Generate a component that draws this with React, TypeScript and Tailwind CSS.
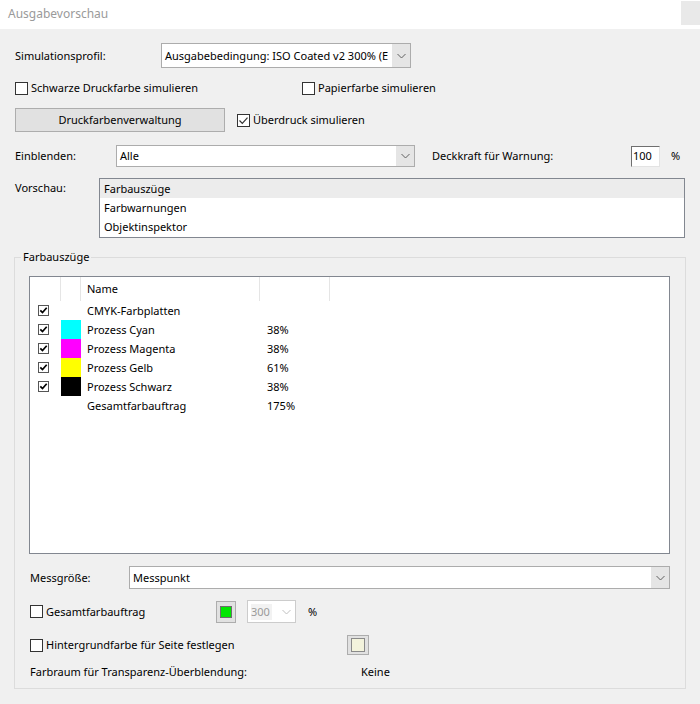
import React from 'react';

const Chevron = ({ color = '#606060' }: { color?: string }) => (
    <svg width="9" height="6" viewBox="0 0 9 6">
        <path d="M0.5 1 L4.5 5 L8.5 1" fill="none" stroke={color} strokeWidth="1" />
    </svg>
);

const CheckBox = ({ checked }: { checked?: boolean }) => (
    <span className="w-[13px] h-[13px] border border-[#333333] bg-white flex items-center justify-center shrink-0">
        {checked && (
            <svg width="11" height="11" viewBox="0 0 11 11">
                <path d="M1.5 5.5 L4.3 8.3 L9.5 2.6" fill="none" stroke="#333333" strokeWidth="1.2" />
            </svg>
        )}
    </span>
);

const SmallCheck = () => (
    <span className="w-[11px] h-[11px] border border-[#555555] bg-white flex items-center justify-center shrink-0">
        <svg width="9" height="9" viewBox="0 0 9 9">
            <path d="M1.3 4.3 L3.5 6.6 L7.7 1.8" fill="none" stroke="#000000" strokeWidth="1.7" />
        </svg>
    </span>
);

const Dropdown = ({ value, className }: { value: string; className: string }) => (
    <div className={`flex border border-[#acacac] bg-white ${className}`}>
        <div className="flex-1 flex items-center pl-[3px] pr-[4px] overflow-hidden whitespace-nowrap">{value}</div>
        <div className="w-[18px] bg-[#e5e5e5] flex items-center justify-center">
            <Chevron />
        </div>
    </div>
);

const rows = [
    { name: 'CMYK-Farbplatten', color: '', pct: '', check: true },
    { name: 'Prozess Cyan', color: 'bg-[#00ffff]', pct: '38%', check: true },
    { name: 'Prozess Magenta', color: 'bg-[#ff00ff]', pct: '38%', check: true },
    { name: 'Prozess Gelb', color: 'bg-[#ffff00]', pct: '61%', check: true },
    { name: 'Prozess Schwarz', color: 'bg-[#000000]', pct: '38%', check: true },
    { name: 'Gesamtfarbauftrag', color: '', pct: '175%', check: false },
];

export default function App() {
    return (
        <div className="w-[700px] h-[704px] bg-[#f0f0f0] flex flex-col text-[11px] leading-[16px] text-black" style={{ fontFamily: '"Noto Sans", sans-serif' }}>
            {/* title bar */}
            <div className="h-[29px] bg-white flex items-start justify-between shrink-0">
                <span className="pl-[8px] mt-[6px] text-[12px] text-[#9a9a9a]">Ausgabevorschau</span>
                <div className="w-[19px] h-[24px] mt-[1px] bg-[#e9e9e9]" />
            </div>

            <div className="flex-1 flex flex-col px-[15px] pt-[14px]">
                <div className="flex items-center h-[25px]">
                    <span className="w-[146px]">Simulationsprofil:</span>
                    <Dropdown value="Ausgabebedingung: ISO Coated v2 300% (E" className="w-[250px] h-[25px]" />
                </div>

                <div className="flex items-center h-[16px] mt-[12px]">
                    <label className="w-[287px] flex items-center gap-[3px]">
                        <CheckBox /> Schwarze Druckfarbe simulieren
                    </label>
                    <label className="flex items-center gap-[3px]">
                        <CheckBox /> Papierfarbe simulieren
                    </label>
                </div>

                <div className="flex items-center h-[24px] mt-[12px]">
                    <button className="w-[210px] h-[24px] bg-[#e1e1e1] border border-[#adadad]">Druckfarbenverwaltung</button>
                    <label className="ml-[12px] flex items-center gap-[3px]">
                        <CheckBox checked /> Überdruck simulieren
                    </label>
                </div>

                <div className="flex items-center h-[22px] mt-[13px]">
                    <span className="w-[101px]">Einblenden:</span>
                    <Dropdown value="Alle" className="w-[299px] h-[22px]" />
                    <span className="ml-[17px] w-[199px]">Deckkraft für Warnung:</span>
                    <div className="w-[29px] h-[21px] bg-white border-l border-t border-[#6f6f6f] border-r-[#e3e3e3] border-b-[#e3e3e3] border-r border-b flex items-center pl-[1px]">100</div>
                    <span className="ml-[11px]">%</span>
                </div>

                <div className="flex mt-[11px]">
                    <span className="w-[84px] mt-[2px]">Vorschau:</span>
                    <div className="flex-1 h-[60px] border border-[#828790] bg-white pb-[1px]">
                        <div className="h-[19px] flex items-center pl-[4px] bg-[#ececec]">Farbauszüge</div>
                        <div className="h-[19px] flex items-center pl-[4px]">Farbwarnungen</div>
                        <div className="h-[19px] flex items-center pl-[4px]">Objektinspektor</div>
                    </div>
                </div>

                <fieldset className="mt-[11px] mx-[-1px] border border-[#dcdcdc] pl-[14px] pr-[15px] pb-[8px]">
                    <legend className="ml-[-8px] px-[2px] leading-[16px]">Farbauszüge</legend>

                    <div className="mt-[11px] h-[278px] border border-[#828790] bg-white">
                        <div className="flex h-[24px]">
                            <div className="w-[31px] border-r border-[#e5e5e5]" />
                            <div className="w-[20px] border-r border-[#e5e5e5]" />
                            <div className="w-[179px] border-r border-[#e5e5e5] flex items-center pl-[6px]">Name</div>
                            <div className="w-[70px] border-r border-[#e5e5e5]" />
                        </div>
                        {rows.map((r) => (
                            <div key={r.name} className="flex h-[19px] items-center">
                                <div className="w-[31px] pl-[8px]">{r.check && <SmallCheck />}</div>
                                <div className={`w-[20px] h-[19px] ${r.color}`} />
                                <div className="w-[179px] pl-[6px]">{r.name}</div>
                                <div className="w-[70px] pl-[7px]">{r.pct}</div>
                            </div>
                        ))}
                    </div>

                    <div className="flex items-center h-[23px] mt-[12px] pl-[1px]">
                        <span className="w-[99px]">Messgröße:</span>
                        <Dropdown value="Messpunkt" className="flex-1 h-[23px]" />
                    </div>

                    <div className="flex items-center h-[23px] mt-[11px] pl-[1px]">
                        <label className="w-[186px] flex items-center gap-[3px]">
                            <CheckBox /> Gesamtfarbauftrag
                        </label>
                        <div className="w-[20px] h-[22px] border border-[#adadad] bg-[#e1e1e1] flex items-center justify-center">
                            <span className="w-[12px] h-[12px] bg-[#00e600] border border-[#6c6c6c]" />
                        </div>
                        <div className="ml-[11px] w-[49px] h-[23px] border border-[#cccccc] bg-white flex">
                            <div className="flex-1 flex items-center pl-[3px] text-[#9a9a9a]">
                                <span className="bg-[#f2f2f2] pr-[2px]">300</span>
                            </div>
                            <div className="w-[18px] flex items-center justify-center">
                                <Chevron color="#c0c0c0" />
                            </div>
                        </div>
                        <span className="ml-[12px]">%</span>
                    </div>

                    <div className="flex items-center h-[20px] mt-[12px] pl-[1px]">
                        <label className="w-[317px] flex items-center gap-[3px]">
                            <CheckBox /> Hintergrundfarbe für Seite festlegen
                        </label>
                        <div className="w-[22px] h-[20px] border border-[#adadad] bg-[#e1e1e1] flex items-center justify-center">
                            <span className="w-[14px] h-[14px] bg-[#f3f3dc] border border-[#8a8a8a]" />
                        </div>
                    </div>

                    <div className="flex items-center h-[16px] mt-[9px] pl-[1px]">
                        <span className="w-[331px]">Farbraum für Transparenz-Überblendung:</span>
                        <span>Keine</span>
                    </div>
                </fieldset>
            </div>
        </div>
    );
}
